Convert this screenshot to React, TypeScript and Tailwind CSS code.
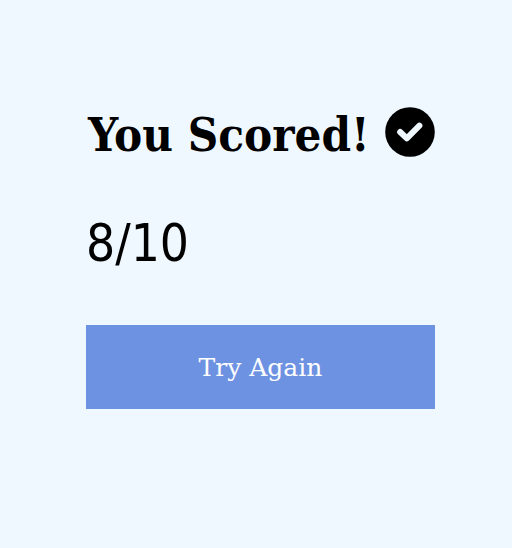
function CheckBadge() {
  return (
    <svg viewBox="0 0 50 50" className="size-[50px] shrink-0" aria-hidden="true">
      <circle cx="25" cy="25" r="24.8" fill="currentColor" />
      <path
        d="M15.2 25 L21.8 31.3 L34.4 18.7"
        fill="none"
        stroke="#f0f8ff"
        strokeWidth="6"
        strokeLinecap="round"
        strokeLinejoin="round"
      />
    </svg>
  );
}

export default function App() {
  return (
    <main className="flex min-h-screen flex-col items-center justify-center bg-[#f0f8ff] pb-8 pl-[9px] text-black">
      <section className="flex w-[349px] max-w-full flex-col gap-[49px]">
        <h1 className="flex items-start justify-between whitespace-nowrap pl-0.5 font-['DejaVu_Serif_Condensed','DejaVu_Serif',serif] text-[47px] font-bold leading-[56px]">
          You Scored!
          <CheckBadge />
        </h1>
        <p className="font-['DejaVu_Sans_Condensed','DejaVu_Sans',sans-serif] text-[51px] leading-[64px]">8/10</p>
        <button
          type="button"
          className="h-[84px] w-full cursor-pointer bg-[#6e92e2] pt-0.5 font-['DejaVu_Serif',serif] text-[25px] text-white"
        >
          Try Again
        </button>
      </section>
    </main>
  );
}
